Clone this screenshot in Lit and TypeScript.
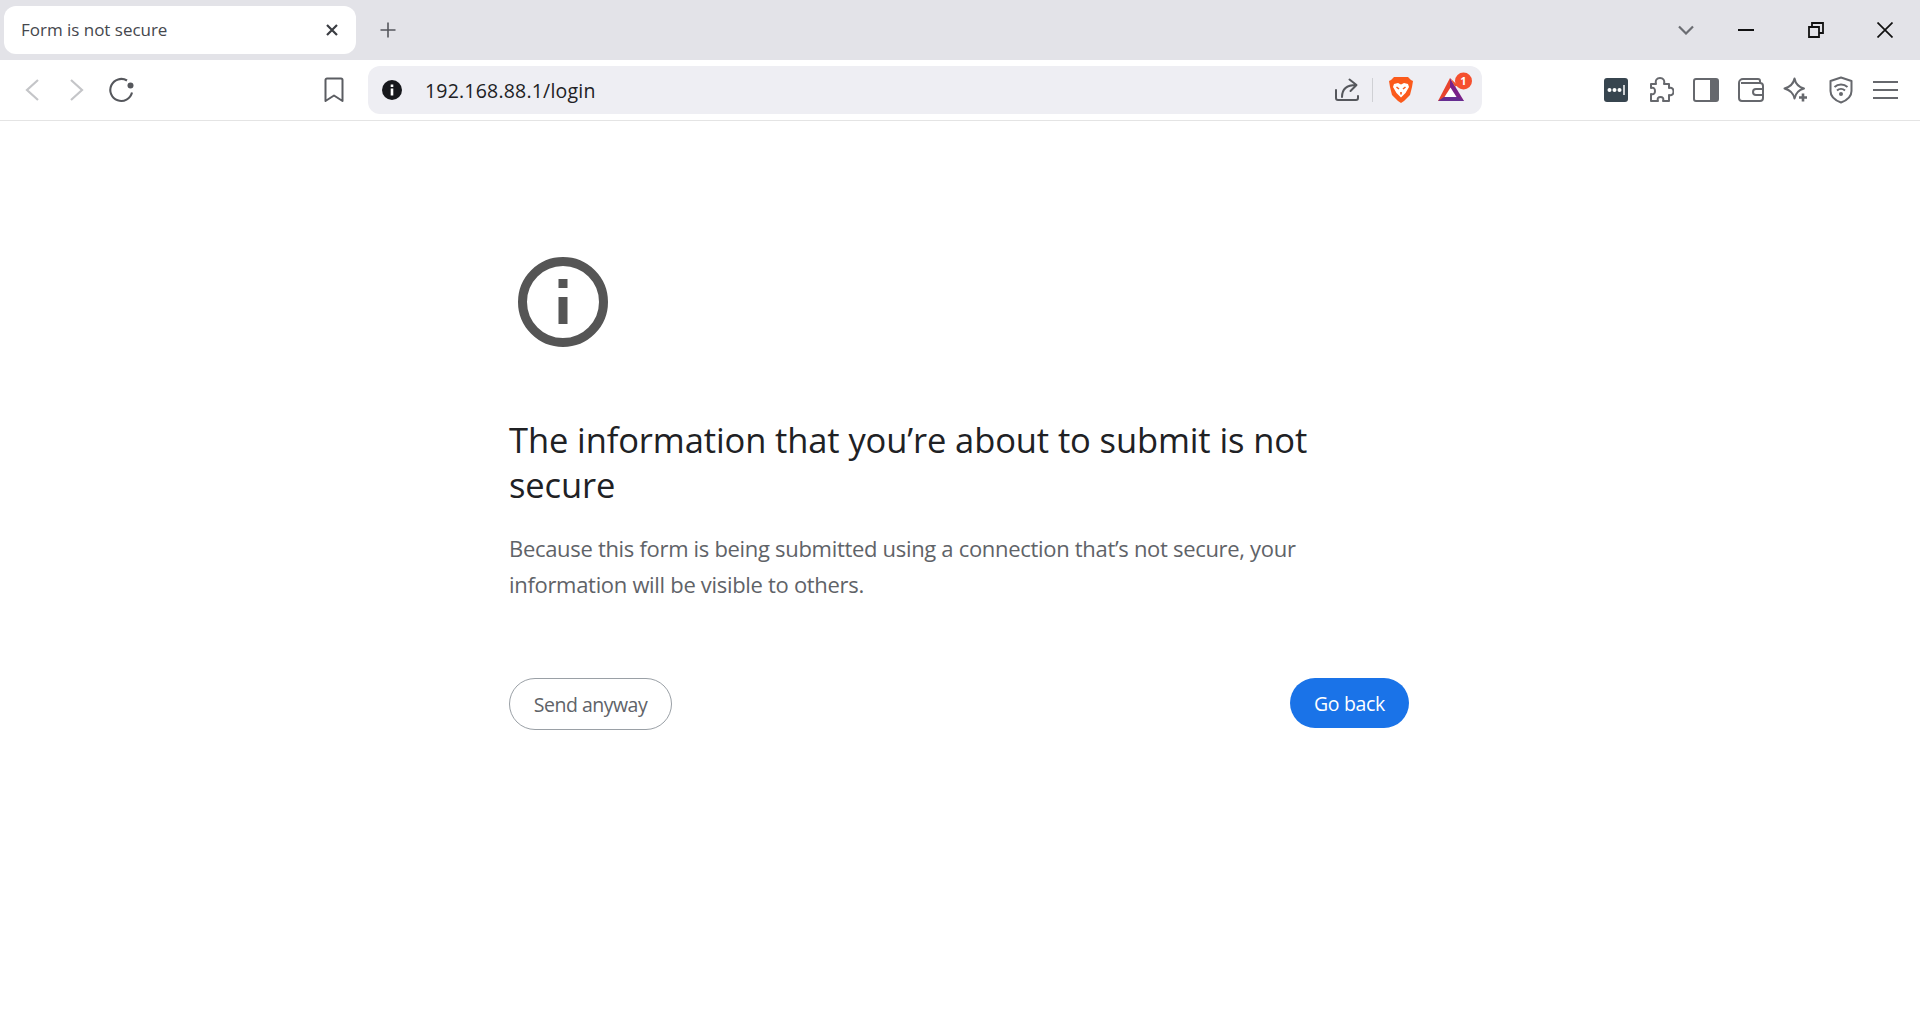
import { LitElement, html, css } from "lit";
import { customElement } from "lit/decorators.js";

@customElement("app-root")
export class AppRoot extends LitElement {
  static styles = css`
    :host { display: block; height: 1015px; background: #fff; font-family: "Open Sans", "Noto Sans", sans-serif; overflow: hidden; }
    svg { display: block; flex: none; }
    .strip { height: 60px; background: #e3e3e8; display: flex; align-items: flex-start; padding-left: 4px; box-sizing: border-box; }
    .tab { width: 352px; height: 48px; margin-top: 6px; background: #fff; border-radius: 12px; display: flex; align-items: center; padding: 0 17px 0 17px; box-sizing: border-box; justify-content: space-between; }
    .tab span { font-size: 17px; color: #45474d; letter-spacing: -0.02px; margin-top: -2px; }
    .new { margin: 18px 0 0 24px; }
    .win { margin-left: auto; display: flex; align-items: center; height: 60px; }
    .chev { margin-right: 44px; }
    .min { margin-right: 54px; }
    .rest { margin-right: 53px; }
    .cl { margin-right: 27px; }
    .bar { height: 61px; border-bottom: 1px solid #e4e4e4; box-sizing: border-box; display: flex; align-items: center; padding-left: 24px; }
    .back { margin-right: 29px; }
    .fwd { margin-right: 24px; }
    .reload { margin-right: 189px; }
    .bm { margin-right: 24px; }
    .url { width: 1114px; height: 48px; border-radius: 12px; background: #eeeef3; display: flex; align-items: center; padding: 0 8px 0 14px; box-sizing: border-box; }
    .url .addr { margin-left: 23px; font-size: 19.5px; color: #202124; letter-spacing: 0.2px; flex: 1; }
    .sep { width: 1px; height: 24px; background: #cfd0d4; margin: 0 15px 0 13px; }
    .bat { margin: -6px 0 0 22px; }
    .exts { display: flex; align-items: center; margin-left: 111px; }
    .exts div { width: 45px; display: flex; justify-content: center; }
    .page { padding: 115px 0 0 509px; width: 900px; }
    .big { margin: 21px 0 0 9px; }
    h1 { margin: 70px 0 0; width: 820px; font-weight: 400; font-size: 34.5px; line-height: 45px; color: #202124; letter-spacing: -0.11px; }
    p { margin: 23px 0 0; width: 810px; font-size: 22px; line-height: 36px; color: #5f6368; letter-spacing: -0.31px; }
    .acts { display: flex; justify-content: space-between; align-items: flex-start; margin-top: 76px; }
    button { font-family: inherit; font-size: 19.5px; letter-spacing: -0.35px; border-radius: 26px; box-sizing: border-box; padding: 0; }
    .send { width: 163px; height: 52px; background: #fff; border: 1px solid #9aa0a6; color: #5f6368; letter-spacing: -0.5px; }
    .go { width: 119px; height: 50px; background: #1a73e8; border: 0; color: #fff; }
  `;

  render() {
    return html`
      <div class="strip">
        <div class="tab">
          <span>Form is not secure</span>
          <svg width="14" height="14" viewBox="0 0 14 14"><path d="M2 2l10 10M12 2L2 12" stroke="#3b3d42" stroke-width="2.2" fill="none"/></svg>
        </div>
        <svg class="new" width="16" height="24" viewBox="0 0 16 24"><path d="M8 4.5v15M0.5 12h15" stroke="#55575c" stroke-width="1.6" fill="none"/></svg>
        <div class="win">
          <svg class="chev" width="16" height="10" viewBox="0 0 16 10"><path d="M1 1.5l7 7 7-7" stroke="#6b6d72" stroke-width="2.2" fill="none"/></svg>
          <svg class="min" width="16" height="2" viewBox="0 0 16 2"><path d="M0 1h16" stroke="#111" stroke-width="2"/></svg>
          <svg class="rest" width="16" height="16" viewBox="0 0 16 16"><path d="M1 5h10v10H1zM4 5V1h11v10h-4" stroke="#111" stroke-width="1.8" fill="none"/></svg>
          <svg class="cl" width="16" height="16" viewBox="0 0 16 16"><path d="M.5.5l15 15M15.5.5l-15 15" stroke="#111" stroke-width="1.7" fill="none"/></svg>
        </div>
      </div>
      <div class="bar">
        <svg class="back" width="16" height="24" viewBox="0 0 16 24"><path d="M14 2L3 12l11 10" stroke="#c4c5c8" stroke-width="2.2" fill="none"/></svg>
        <svg class="fwd" width="16" height="24" viewBox="0 0 16 24"><path d="M2 2l11 10L2 22" stroke="#c4c5c8" stroke-width="2.2" fill="none"/></svg>
        <svg class="reload" width="26" height="26" viewBox="0 0 26 26"><path d="M23 15.500A11 11 0 1 1 18 3.500" stroke="#55575c" stroke-width="2.1" fill="none"/><circle cx="21.500" cy="8.500" r="3" fill="#55575c"/></svg>
        <svg class="bm" width="20" height="26" viewBox="0 0 20 26"><path d="M3 1.5h14a1.5 1.5 0 0 1 1.5 1.5v21L10 18.5 1.5 24V3A1.5 1.5 0 0 1 3 1.5z" stroke="#5b5d62" stroke-width="2" fill="none" stroke-linejoin="round"/></svg>
        <div class="url">
          <svg width="20" height="20" viewBox="0 0 20 20"><circle cx="10" cy="10" r="10" fill="#17181c"/><path d="M8.7 4.5h2.6v2.4H8.7zM8.7 8.5h2.6v7H8.7z" fill="#fff"/></svg>
          <span class="addr">192.168.88.1/login</span>
          <svg width="24" height="24" viewBox="0 0 24 24"><path d="M1 12v8a2 2 0 0 0 2 2h18a2 2 0 0 0 2-2v-2" stroke="#55575c" stroke-width="2" fill="none" stroke-linecap="round"/><path d="M7 19c0-8 5-12 14-12M14.500 1.500L21.500 7l-6 6" stroke="#55575c" stroke-width="2" fill="none" stroke-linejoin="round" stroke-linecap="round"/></svg>
          <span class="sep"></span>
          <svg width="26" height="28" viewBox="0 0 26 28"><path d="M6 1h14l3 3 2 1-1 6-2 8-6 6-3 2-3-2-6-6-2-8-1-6 2-1z" fill="#fb5a1c"/><path d="M6 8l4-1 3 1.500L16 7l4 1 1 3-3.500 6-4.500 4.500L8.500 17 5 11z" fill="#fff"/><path d="M8.500 11l2.500 2M17.500 11L15 13M13 16v2.500" stroke="#fb5a1c" stroke-width="1.600"/></svg>
          <svg class="bat" width="38" height="36" viewBox="0 0 38 36"><path d="M14 9L2 32h12z" fill="#e8432e"/><path d="M14 9l14 23H14z" fill="#7a2188"/><path d="M14 9l5 8.500 3-1z" fill="#e8532e"/><path d="M2 32l6-4h13l7 4z" fill="#662d91"/><path d="M14.500 18.500L8.500 28h12z" fill="#fff"/><circle cx="27.500" cy="12" r="8.500" fill="#f5502f"/><text x="27.500" y="16" text-anchor="middle" font-size="11" font-weight="700" fill="#fff" font-family="Open Sans">1</text></svg>
        </div>
        <div class="exts">
          <div><svg width="24" height="24" viewBox="0 0 24 24"><rect width="24" height="24" rx="3" fill="#37454f"/><circle cx="5.500" cy="12" r="2" fill="#fff"/><circle cx="10.500" cy="12" r="2" fill="#fff"/><circle cx="15.500" cy="12" r="2" fill="#fff"/><path d="M20 7v10" stroke="#fff" stroke-width="1.500"/></svg></div>
          <div><svg width="26" height="26" viewBox="0 0 26 26"><path d="M3 7h5c-1-4 1-6 4-6s5 2 4 6h5v4c3-1 4.500 1 4.500 3.500S24 19 21 18v6h-6c1-3-.5-4-2.500-4s-3.500 1-2.500 4H3v-7c3 1 4-1 4-3s-1-4-4-3z" stroke="#66686d" stroke-width="2" fill="none" stroke-linejoin="round"/></svg></div>
          <div><svg width="26" height="24" viewBox="0 0 26 24"><rect x="1" y="1" width="24" height="22" rx="2" stroke="#66686d" stroke-width="2" fill="none"/><path d="M17 1h6a2 2 0 0 1 2 2v18a2 2 0 0 1-2 2h-6z" fill="#66686d"/></svg></div>
          <div><svg width="26" height="24" viewBox="0 0 26 24"><path d="M22 5V3a2 2 0 0 0-2-2H5a4 4 0 0 0-4 4v15a3 3 0 0 0 3 3h18a3 3 0 0 0 3-3V8a3 3 0 0 0-3-3H3" stroke="#66686d" stroke-width="2" fill="none"/><path d="M25 11h-7a3 3 0 0 0 0 6h7" stroke="#66686d" stroke-width="2" fill="none"/></svg></div>
          <div><svg width="26" height="26" viewBox="0 0 26 26"><path d="M11.500 1.500C12.500 6.500 15.500 10 21 11.500 15.500 13 12.500 16.500 11.500 21.500 10.500 16.500 7 13 1.500 11.500 7 10 10.500 6.500 11.500 1.500z" stroke="#66686d" stroke-width="2" fill="none" stroke-linejoin="round"/><path d="M20 16.500v8M16 20.500h8" stroke="#66686d" stroke-width="2.600"/></svg></div>
          <div><svg width="24" height="28" viewBox="0 0 24 28"><path d="M12 1.500L22.500 5v10c0 6-5 9.500-10.500 11.500C6.500 24.500 1.500 21 1.500 15V5z" stroke="#66686d" stroke-width="2" fill="none" stroke-linejoin="round"/><path d="M5.500 11a9.500 9.500 0 0 1 13 0M8 14.500a6 6 0 0 1 8 0" stroke="#66686d" stroke-width="2" fill="none"/><circle cx="12" cy="18" r="2" fill="#66686d"/></svg></div>
          <div><svg width="25" height="20" viewBox="0 0 25 20"><path d="M0 2h25M0 10h25M0 18h25" stroke="#66686d" stroke-width="2"/></svg></div>
        </div>
      </div>
      <main class="page">
        <svg class="big" width="90" height="90" viewBox="0 0 90 90"><circle cx="45" cy="45" r="40.500" stroke="#555" stroke-width="9" fill="none"/><path d="M40.500 22h9v9h-9zM40.500 40h9v27h-9z" fill="#555"/></svg>
        <h1>The information that you’re about to submit is not secure</h1>
        <p>Because this form is being submitted using a connection that’s not secure, your information will be visible to others.</p>
        <div class="acts">
          <button class="send">Send anyway</button>
          <button class="go">Go back</button>
        </div>
      </main>
    `;
  }
}
